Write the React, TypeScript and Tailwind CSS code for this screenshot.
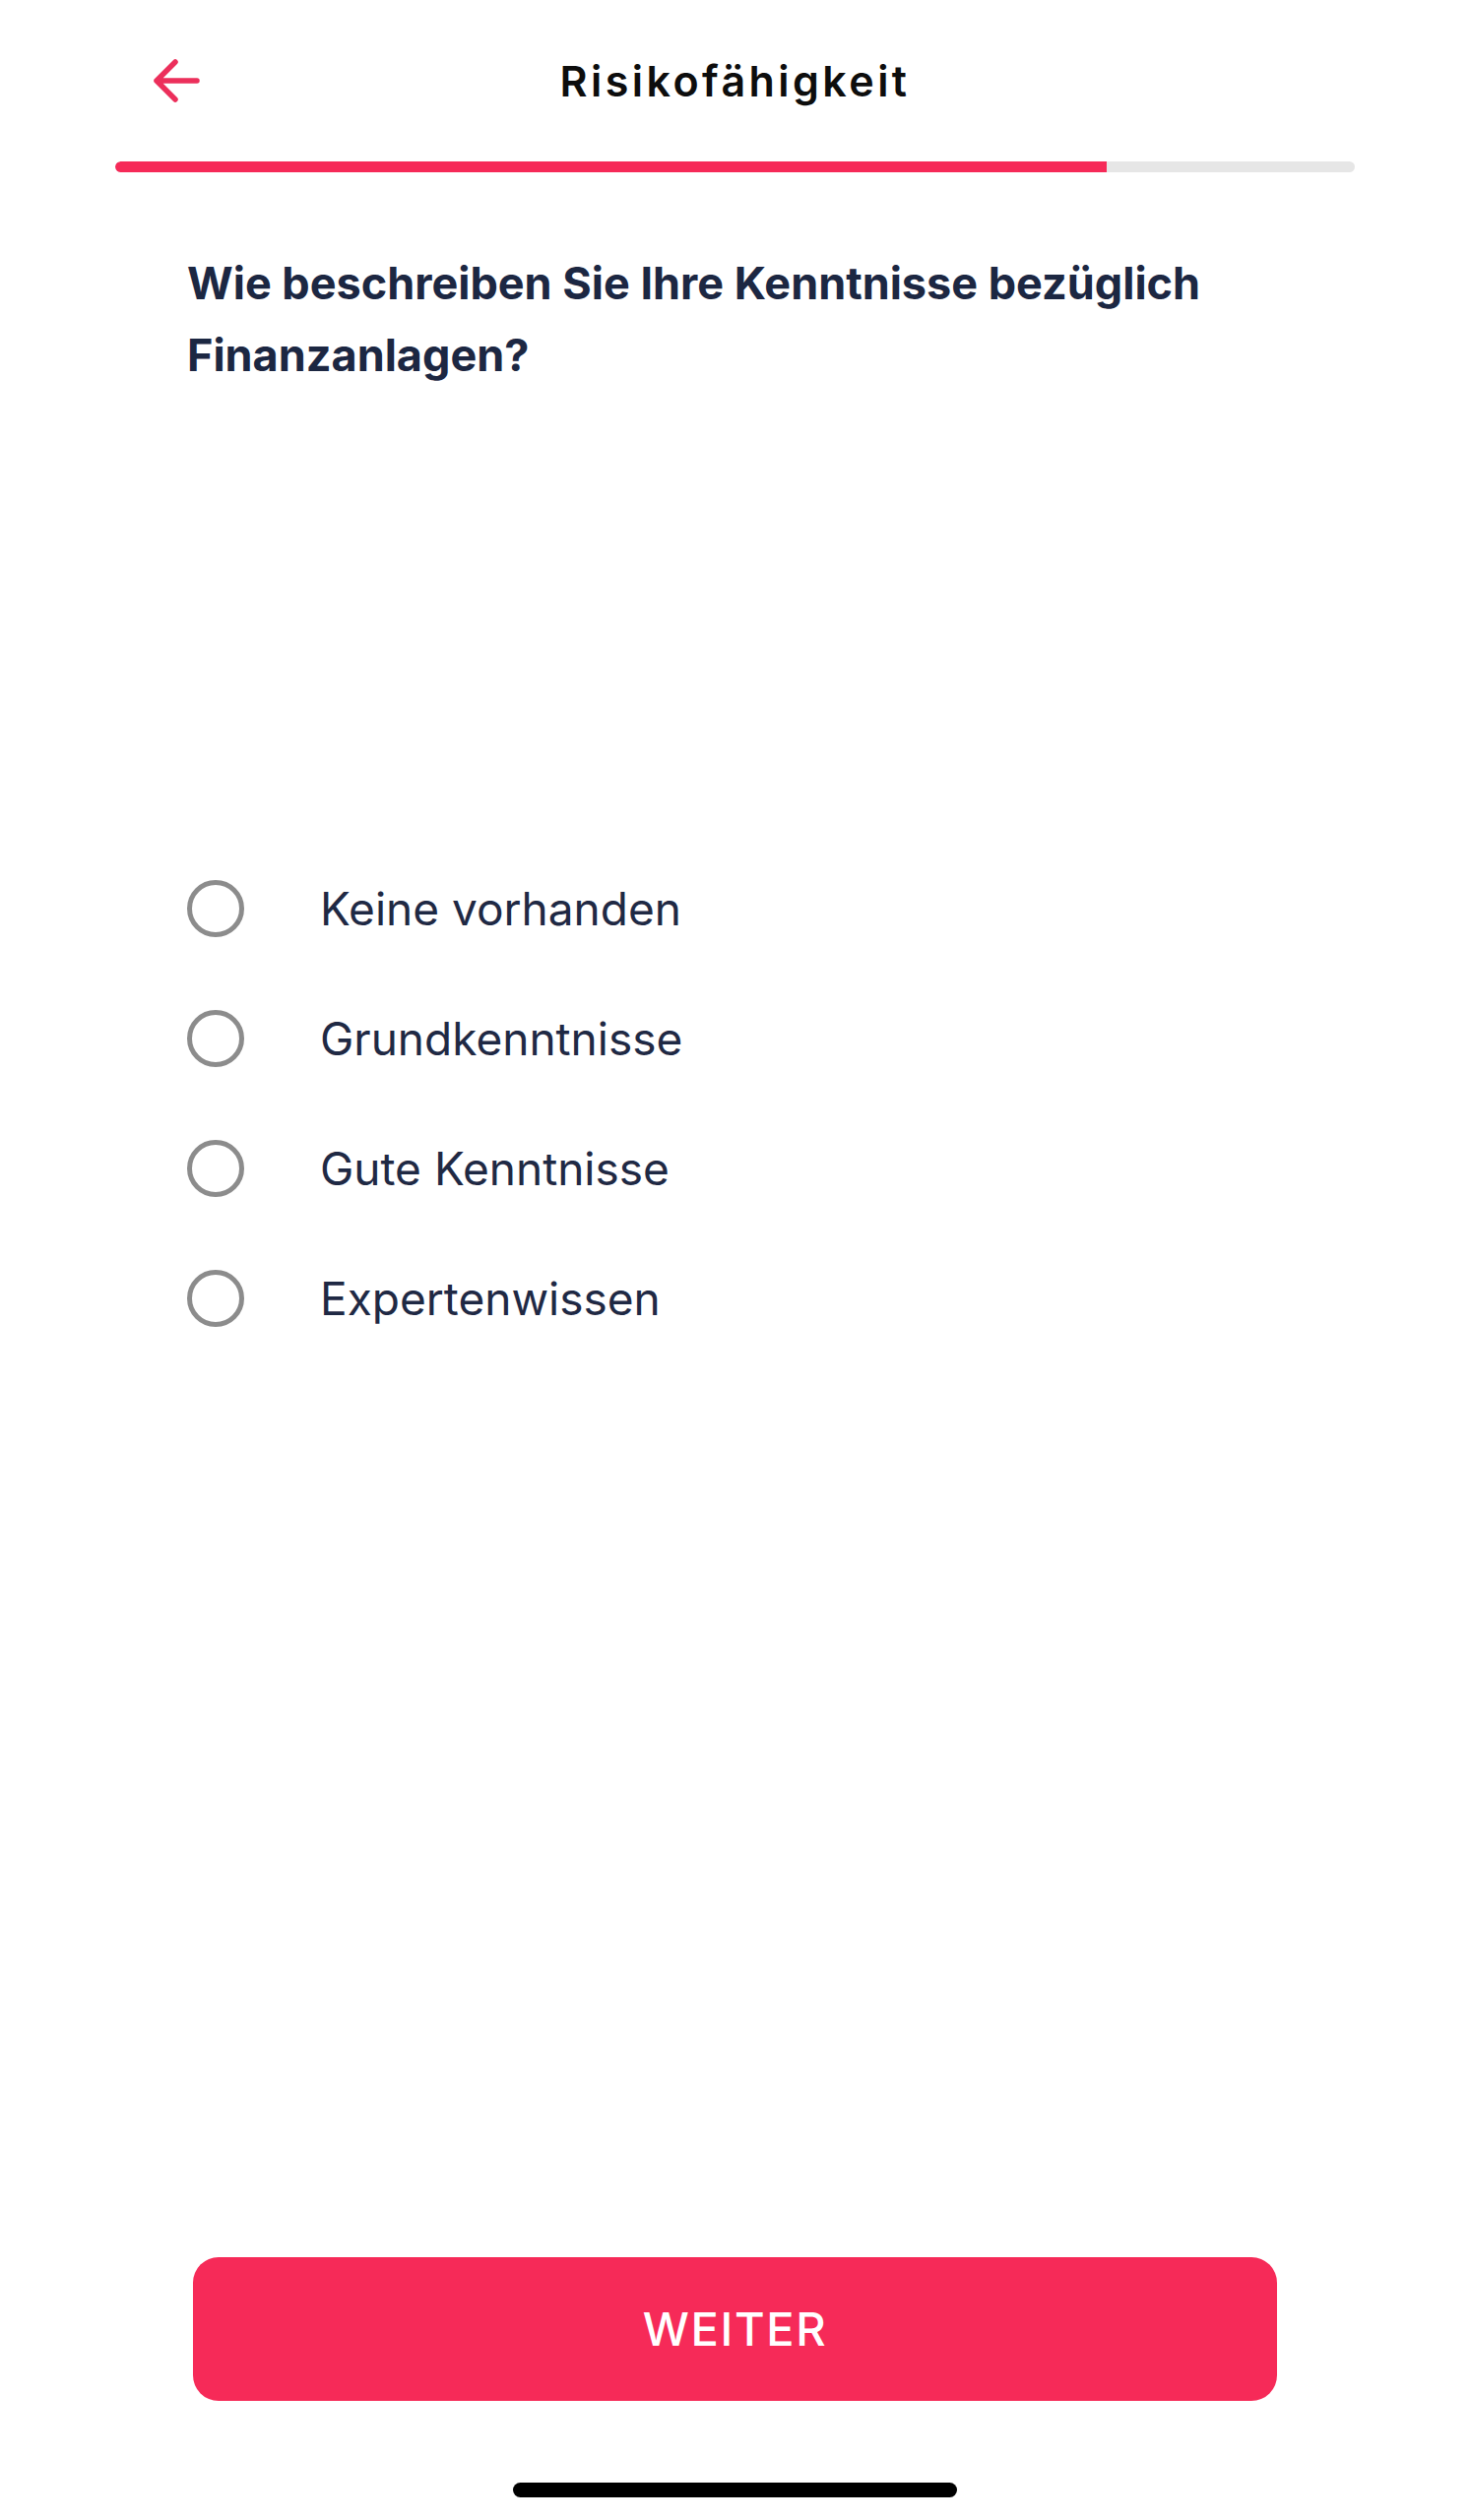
import React from 'react';

const options = ['Keine vorhanden', 'Grundkenntnisse', 'Gute Kenntnisse', 'Expertenwissen'];

const BackArrow: React.FC = () => (
  <svg width="52" height="48" viewBox="0 0 52 48" fill="none">
    <path
      d="M46 24H5M24 5L5 24L24 43"
      stroke="#ec2f5b"
      strokeWidth="5.5"
      strokeLinecap="round"
      strokeLinejoin="round"
    />
  </svg>
);

const RadioRow: React.FC<{ label: string }> = ({ label }) => (
  <div className="flex h-[132px] items-center">
    <div className="h-[58px] w-[58px] shrink-0 rounded-full border-[5px] border-[#8c8c8c]" />
    <span className="ml-[77px] text-[46px] leading-none text-[#1f2944]">{label}</span>
  </div>
);

export default function App() {
  return (
    <div className="flex h-[2560px] w-full flex-col bg-white font-['Inter','Liberation_Sans',sans-serif]">
      {/* Header */}
      <div className="mt-[42px] grid h-[80px] grid-cols-[1fr_auto_1fr] items-center">
        <div className="flex items-center pl-[154px]">
          <BackArrow />
        </div>
        <h1 className="text-[43px] font-semibold leading-none tracking-[0.08em] text-[#0d0d0d]">Risikofähigkeit</h1>
        <div />
      </div>

      {/* Progress */}
      <div className="mx-[117px] mt-[42px] h-[11px] overflow-hidden rounded-full bg-[#e6e6e6]">
        <div className="h-full w-[80%] rounded-l-full bg-[#f62a58]" />
      </div>

      {/* Question */}
      <h2 className="ml-[190px] mt-[76px] w-[1130px] text-[45px] font-bold leading-[73px] text-[#1c2742]">
        Wie beschreiben Sie Ihre Kenntnisse bezüglich Finanzanlagen?
      </h2>

      {/* Options */}
      <div className="ml-[190px] mt-[460px] flex flex-col">
        {options.map((o) => (
          <RadioRow key={o} label={o} />
        ))}
      </div>

      <div className="flex-1" />

      {/* Button */}
      <button className="mx-auto flex h-[146px] w-[1101px] items-center justify-center rounded-[26px] bg-[#f62a58] text-[47px] font-medium tracking-[0.035em] text-white">
        WEITER
      </button>

      {/* Home indicator */}
      <div className="mx-auto mb-[23px] mt-[83px] h-[15px] w-[451px] rounded-full bg-black" />
    </div>
  );
}
